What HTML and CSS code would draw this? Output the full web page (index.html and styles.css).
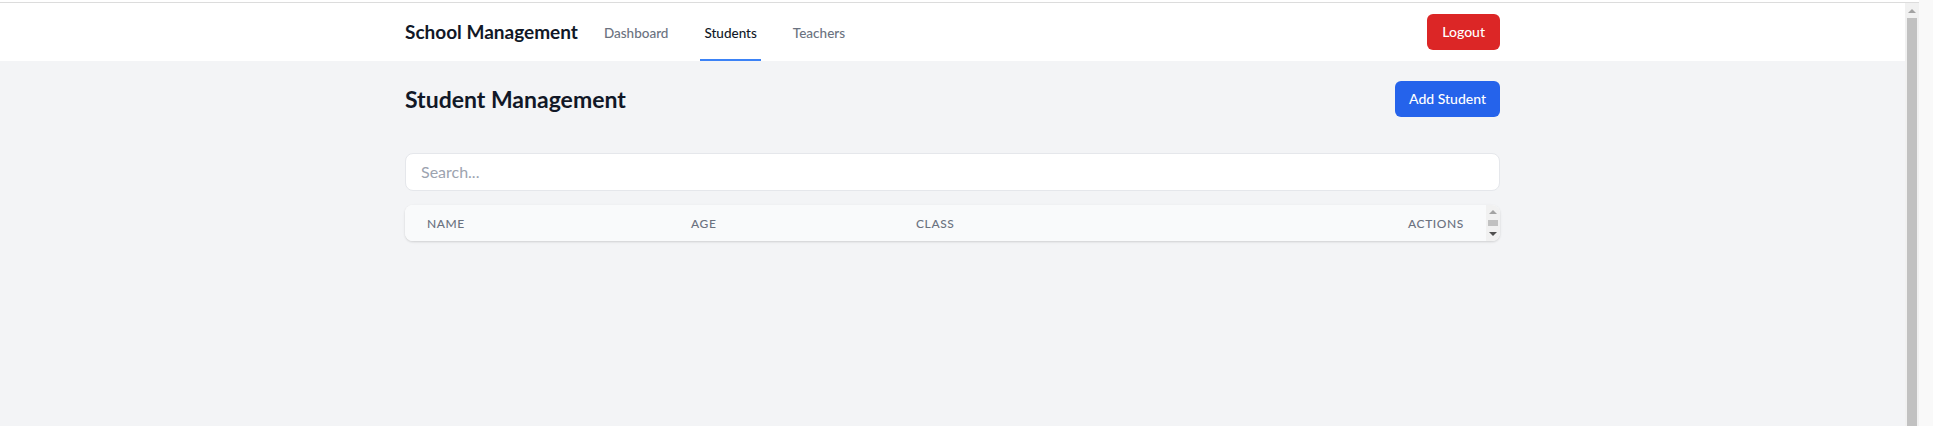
FILE: index.html
```html
<!DOCTYPE html>
<html lang="en">
<head>
<meta charset="utf-8">
<title>School Management</title>
<link rel="stylesheet" href="styles.css">
</head>
<body>
<div class="screen">
  <div class="window">
    <div class="topline"></div>
    <div class="viewport">
      <div class="page">
        <nav class="navbar">
          <div class="container nav-inner">
            <div class="nav-left">
              <span class="brand">School Management</span>
              <div class="nav-links">
                <a class="nav-link">Dashboard</a>
                <a class="nav-link active">Students</a>
                <a class="nav-link">Teachers</a>
              </div>
            </div>
            <button class="btn btn-red">Logout</button>
          </div>
        </nav>
        <main class="container main">
          <div class="page-head">
            <h1 class="title">Student Management</h1>
            <button class="btn btn-blue">Add Student</button>
          </div>
          <div class="search">
            <input class="search-input" type="text" placeholder="Search...">
          </div>
          <div class="table-card">
            <div class="table-head">
              <div class="th">Name</div>
              <div class="th">Age</div>
              <div class="th">Class</div>
              <div class="th th-right">Actions</div>
            </div>
            <div class="mini-scroll">
              <div class="mini-btn"><span class="arrow-up light"></span></div>
              <div class="mini-track"><div class="mini-thumb"></div></div>
              <div class="mini-btn"><span class="arrow-down dark"></span></div>
            </div>
          </div>
        </main>
      </div>
      <div class="vscroll">
        <div class="vbtn"><span class="arrow-up light"></span></div>
        <div class="vthumb"></div>
      </div>
    </div>
  </div>
  <div class="edge"></div>
</div>
</body>
</html>
```

FILE: styles.css
```css
* { box-sizing: border-box; }
html, body { margin: 0; padding: 0; height: 100%; overflow: hidden; }
body {
  font-family: Lato, "Noto Sans", "Liberation Sans", sans-serif;
  color: #111827;
  background: #f9f9f9;
}
.screen { display: flex; height: 426px; width: 1933px; }
.window { flex: 1; display: flex; flex-direction: column; }
.edge { width: 14px; background: #f9f9f9; }
.topline { height: 3px; background: #fff; border-bottom: 1px solid #dcdcdc; }
.viewport { flex: 1; display: flex; min-height: 0; }
.page { flex: 1; background: #f3f4f6; }
.vscroll { width: 14px; background: #f1f1f1; display: flex; flex-direction: column; align-items: center; }
.vbtn { height: 15px; width: 14px; display: flex; align-items: center; justify-content: center; }
.vthumb { flex: 1; width: 10px; background: #c1c1c1; margin-bottom: -20px; }

.arrow-up, .arrow-down { width: 0; height: 0; border-left: 4px solid transparent; border-right: 4px solid transparent; }
.arrow-up.light { border-bottom: 4px solid #a3a3a3; }
.arrow-down.dark { border-top: 4px solid #505050; }

.container { max-width: 1095px; margin: 0 auto; }

.navbar { background: #fff; height: 58px; }
.nav-inner { display: flex; justify-content: space-between; align-items: center; height: 100%; }
.nav-left { display: flex; align-items: stretch; height: 100%; }
.brand { font-size: 19px; font-weight: 700; color: #111827; display: flex; align-items: center; margin-top: -2px; white-space: nowrap; }
.nav-links { display: flex; gap: 28px; margin-left: 22px; }
.nav-link {
  display: flex; align-items: center; padding: 4px 4px 0;
  font-size: 13.5px; font-weight: 500; color: #6b7280;
  border-bottom: 2px solid transparent; white-space: nowrap;
}
.nav-link.active { color: #111827; border-bottom-color: #3b82f6; }

.btn {
  border: 0; border-radius: 6px; color: #fff;
  font-family: inherit; font-size: 14px; font-weight: 500;
  height: 36px; line-height: 20px; white-space: nowrap;
}
.btn-red { background: #dc2626; margin-top: -1px; padding: 0 15px; }
.btn-blue { background: #2563eb; padding: 0 14px; }

.main { padding-top: 20px; }
.page-head { display: flex; justify-content: space-between; align-items: center; }
.title { margin: 0; font-size: 23px; font-weight: 700; line-height: 32px; color: #111827; }

.search { margin-top: 36px; }
.search-input {
  display: block;
  width: 100%; height: 38px; border: 1px solid #e5e7eb; border-radius: 8px;
  background: #fff; padding: 0 15px 2px; font-family: inherit; font-size: 16px; color: #111827;
  outline: none;
}
.search-input::placeholder { color: #9ca3af; }

.table-card {
  margin-top: 14px; display: flex; background: #fff; border-radius: 8px; overflow: hidden;
  box-shadow: 0 1px 3px rgba(0,0,0,0.1), 0 1px 2px rgba(0,0,0,0.06);
}
.table-head {
  flex: 1; display: grid; grid-template-columns: 264px 225px 1fr auto;
  background: #f9fafb; height: 36px; align-items: center;
}
.th {
  padding: 0 22px; font-size: 12px; font-weight: 500; color: #6b7280;
  text-transform: uppercase; letter-spacing: 0.05em;
}
.th-right { text-align: right; }
.mini-scroll { width: 14px; background: #f1f1f1; display: flex; flex-direction: column; }
.mini-btn { height: 14px; display: flex; align-items: center; justify-content: center; }
.mini-track { flex: 1; display: flex; align-items: center; justify-content: center; }
.mini-thumb { width: 10px; height: 6px; background: #c1c1c1; }
```
